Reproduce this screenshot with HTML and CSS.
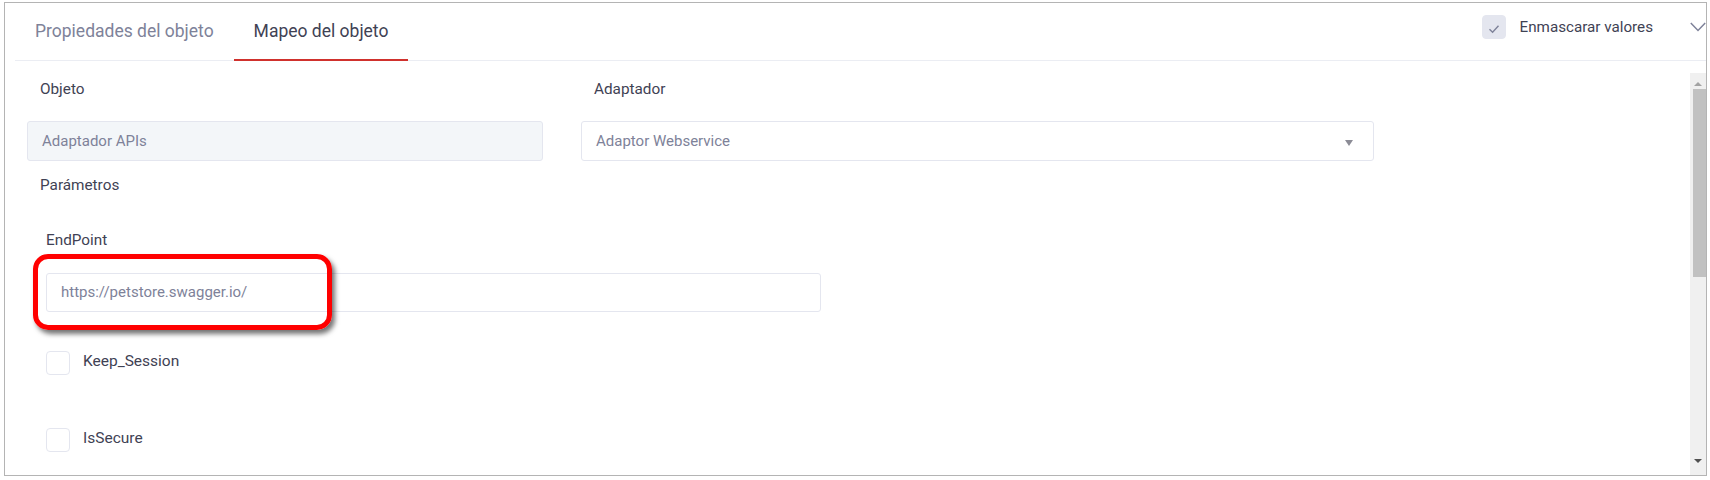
FILE: index.html
```html
<!DOCTYPE html>
<html lang="es">

<head>
    <meta charset="UTF-8">
    <meta name="viewport" content="width=device-width, initial-scale=1.0">
    <title>Mapeo del objeto</title>

    <link rel="stylesheet" href="styles.css">

</head>

<body>
    <div class="panel">
        <div class="tabbar">
            <div class="tab">Propiedades del objeto</div>
            <div class="tab active">Mapeo del objeto</div>

            <div class="mask">
                <span class="check on">
                    <svg width="12" height="10" viewBox="0 0 12 10">
                        <path d="M1.5 5.2 L4.6 8.2 L10.5 1.8" fill="none" stroke="#7e8299" stroke-width="1.4" />
                    </svg>
                </span>
                <span class="mask-label">Enmascarar valores</span>
                <svg class="chevron" width="16" height="10" viewBox="0 0 16 10">
                    <path d="M0.8 1 L8 8.4 L15.2 1" fill="none" stroke="#7e8299" stroke-width="1.5" />
                </svg>
            </div>
        </div>

        <div class="main">
            <div class="content">
                <div class="row">
                    <div class="field col-obj">
                        <label class="label">Objeto</label>
                        <div class="input disabled">Adaptador APIs</div>
                    </div>
                    <div class="field col-adp">
                        <label class="label">Adaptador</label>
                        <div class="input select">
                            Adaptor Webservice
                            <span class="caret"></span>
                        </div>
                    </div>
                </div>

                <div class="label section">Parámetros</div>

                <div class="params">
                    <div class="param-label">EndPoint</div>
                    <div class="endpoint">
                        <div class="input">https://petstore.swagger.io/</div>
                        <!-- marca roja de la captura -->
                        <div class="highlight"></div>
                    </div>

                    <div class="check-row first">
                        <span class="check"></span>
                        <span class="check-label">Keep_Session</span>
                    </div>
                    <div class="check-row">
                        <span class="check"></span>
                        <span class="check-label">IsSecure</span>
                    </div>
                </div>
            </div>

            <div class="scrollbar">
                <div class="arrow up"></div>
                <div class="thumb"></div>
                <div class="track"></div>
                <div class="arrow down"></div>
            </div>
        </div>
    </div>
</body>

</html>
```

FILE: styles.css
```css
* {
    margin: 0;
    padding: 0;
    box-sizing: border-box;
}

body {
    background: #fff;
    font-family: Roboto, "Liberation Sans", sans-serif;
    color: #3f4254;
}

.panel {
    width: 1703px;
    height: 474px;
    margin: 2px 0 0 4px;
    border: 1px solid #b4b4b4;
    overflow: hidden;
    display: flex;
    flex-direction: column;
}

/* pestañas */
.tabbar {
    display: flex;
    height: 58px;
    margin-left: 10px;
    border-bottom: 1px solid #ebedf3;
}

.tab {
    height: 58px;
    margin-bottom: -1px;
    padding: 0 20px;
    line-height: 57px;
    font-size: 17.5px;
    color: #7e8299;
}

.tab.active {
    color: #3f4254;
    border-bottom: 2px solid #d0312d;
}

.mask {
    margin-left: auto;
    display: flex;
    align-items: center;
    height: 24px;
    margin-top: 12px;
}

.mask-label {
    margin-left: 14px;
    font-size: 15.2px;
    color: #3f4254;
}

.chevron {
    margin-left: 37px;
    margin-top: -1px;
}

.check {
    width: 24px;
    height: 24px;
    border: 1px solid #e4e6ef;
    border-radius: 4px;
    background: #fff;
    display: flex;
    align-items: center;
    justify-content: center;
    flex-shrink: 0;
}

.check.on {
    background: #e4e6ef;
    border-color: #e4e6ef;
}

.check.on svg {
    margin-top: 3px;
}

/* cuerpo */
.main {
    flex: 1;
    display: flex;
}

.content {
    flex: 1;
    padding: 18px 0 0 22px;
}

.row {
    display: flex;
    gap: 38px;
}

.col-obj {
    width: 516px;
}

.col-adp {
    width: 793px;
}

.label {
    display: block;
    padding-left: 13px;
    font-size: 15.3px;
    line-height: 20px;
    color: #3f4254;
}

.field .input {
    margin-top: 22px;
}

.input {
    position: relative;
    height: 40px;
    padding-left: 14px;
    border: 1px solid #e4e6ef;
    border-radius: 3px;
    background: #fff;
    font-size: 15px;
    line-height: 38px;
    color: #7e8299;
}

.input.disabled {
    background: #f3f6f9;
}

.caret {
    position: absolute;
    right: 20px;
    top: 18px;
    border-left: 4px solid transparent;
    border-right: 4px solid transparent;
    border-top: 6px solid #8c8c96;
}

.section {
    margin-top: 14px;
}

.params {
    padding-left: 19px;
    padding-top: 35px;
}

.param-label {
    font-size: 15.3px;
    line-height: 20px;
    color: #3f4254;
}

.endpoint {
    position: relative;
    width: 775px;
    margin-top: 23px;
}

.endpoint .input {
    height: 39px;
    line-height: 37px;
}

.highlight {
    position: absolute;
    left: -13px;
    top: -19px;
    width: 299px;
    height: 76px;
    border: 5px solid #ff0000;
    border-radius: 15px;
    box-shadow: 3px 4px 5px rgba(0, 0, 0, 0.55);
}

.check-row {
    display: flex;
    align-items: flex-start;
    margin-top: 53px;
}

.check-row.first {
    margin-top: 39px;
}

.check-label {
    margin-left: 13px;
    font-size: 15.5px;
    line-height: 20px;
    color: #3f4254;
}

/* barra de desplazamiento */
.scrollbar {
    width: 16px;
    margin-top: 12px;
    background: #f0f0f0;
    display: flex;
    flex-direction: column;
    align-items: flex-end;
}

.arrow {
    height: 16px;
    width: 16px;
    display: flex;
    justify-content: center;
}

.arrow.up {
    align-items: flex-end;
    padding-bottom: 3px;
}

.arrow.down {
    align-items: flex-start;
}

.arrow.up::before,
.arrow.down::before {
    content: "";
    border-left: 4px solid transparent;
    border-right: 4px solid transparent;
}

.arrow.up::before {
    border-bottom: 4px solid #a3a3a3;
}

.arrow.down::before {
    border-top: 4px solid #505050;
}

.thumb {
    width: 13px;
    height: 188px;
    background: #c1c1c1;
}

.track {
    flex: 1;
}
```
